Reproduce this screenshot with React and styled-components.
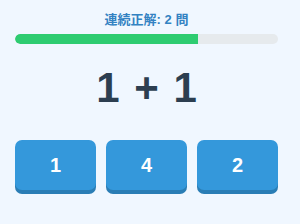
import React from "react";
import styled, { createGlobalStyle } from "styled-components";

const GlobalStyle = createGlobalStyle`
  html, body {
    margin: 0;
    padding: 0;
    background: #f0f7ff;
  }
  body {
    font-family: "Liberation Sans", Arial, "Noto Sans CJK JP", sans-serif;
  }
`;

const Page = styled.div`
  width: 300px;
  height: 224px;
  box-sizing: border-box;
  padding: 12px 22px 0 15px;
  background: #f0f7ff;
`;

const Streak = styled.div`
  text-align: center;
  font-size: 13px;
  line-height: 16px;
  font-weight: bold;
  color: #3382c2;
  font-family: "Liberation Sans", "Noto Sans CJK JP", sans-serif;
`;

const Track = styled.div`
  margin-top: 6px;
  height: 10px;
  border-radius: 5px;
  background: #e6eaed;
  overflow: hidden;
`;

const Fill = styled.div`
  height: 100%;
  background: #2ecc71;
  border-radius: 5px 0 0 5px;
`;

const Question = styled.div`
  margin-top: 23px;
  text-align: center;
  font-size: 42px;
  line-height: 42px;
  font-weight: bold;
  word-spacing: 3px;
  color: #2c3e50;
`;

const Choices = styled.div`
  margin-top: 31px;
  display: grid;
  grid-template-columns: repeat(3, 1fr);
  gap: 10px;
`;

const Choice = styled.button`
  height: 50px;
  border: none;
  border-radius: 7px;
  background: #3498db;
  box-shadow: 0 4px 0 #2a7db5;
  color: #fff;
  font-family: "Liberation Sans", Arial, sans-serif;
  font-size: 20px;
  font-weight: bold;
  padding: 0;
  cursor: pointer;
`;

export default function App() {
  const streak = 2;
  const progress = 69.6;
  const options = [1, 4, 2];

  return (
    <>
      <GlobalStyle />
      <Page>
        <Streak>連続正解: {streak} 問</Streak>
        <Track>
          <Fill style={{ width: `${progress}%` }} />
        </Track>
        <Question>1 + 1</Question>
        <Choices>
          {options.map((n, i) => (
            <Choice key={i}>{n}</Choice>
          ))}
        </Choices>
      </Page>
    </>
  );
}
